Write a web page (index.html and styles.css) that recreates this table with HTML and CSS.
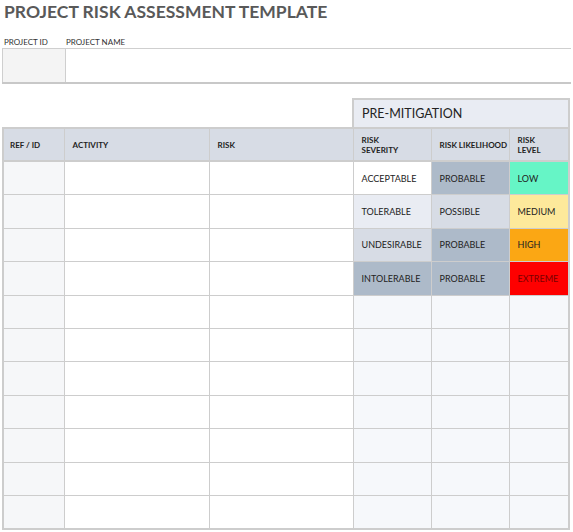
FILE: index.html
```html
<!DOCTYPE html>
<html>
<head>
<meta charset="utf-8">
<link rel="stylesheet" href="styles.css">
</head>
<body>
<div class="page">
  <h1 class="title">PROJECT RISK ASSESSMENT TEMPLATE</h1>
  <div class="proj">
    <div class="proj-labels">
      <span class="lbl lbl-id">PROJECT ID</span>
      <span class="lbl">PROJECT NAME</span>
    </div>
    <div class="proj-box">
      <div class="proj-id"></div>
      <div class="proj-name"></div>
    </div>
  </div>
  <table class="risk">
    <colgroup>
      <col class="c1"><col class="c2"><col class="c3"><col class="c4"><col class="c5"><col class="c6">
    </colgroup>
    <tr class="pre-row">
      <td colspan="3" class="blank"></td>
      <td colspan="3" class="pre">PRE-MITIGATION</td>
    </tr>
    <tr class="head">
      <th>REF / ID</th><th>ACTIVITY</th><th>RISK</th><th>RISK<br>SEVERITY</th><th>RISK LIKELIHOOD</th><th>RISK<br>LEVEL</th>
    </tr>
    <tr>
      <td class="id"></td><td></td><td></td>
      <td class="sev-acc">ACCEPTABLE</td><td class="lk-prob">PROBABLE</td><td class="lv-low">LOW</td>
    </tr>
    <tr>
      <td class="id"></td><td></td><td></td>
      <td class="sev-tol">TOLERABLE</td><td class="lk-poss">POSSIBLE</td><td class="lv-med">MEDIUM</td>
    </tr>
    <tr>
      <td class="id"></td><td></td><td></td>
      <td class="sev-und">UNDESIRABLE</td><td class="lk-prob">PROBABLE</td><td class="lv-high">HIGH</td>
    </tr>
    <tr>
      <td class="id"></td><td></td><td></td>
      <td class="sev-int">INTOLERABLE</td><td class="lk-prob">PROBABLE</td><td class="lv-ext">EXTREME</td>
    </tr>
    <tr><td class="id"></td><td></td><td></td><td class="e"></td><td class="e"></td><td class="e"></td></tr>
    <tr><td class="id"></td><td></td><td></td><td class="e"></td><td class="e"></td><td class="e"></td></tr>
    <tr><td class="id"></td><td></td><td></td><td class="e"></td><td class="e"></td><td class="e"></td></tr>
    <tr><td class="id"></td><td></td><td></td><td class="e"></td><td class="e"></td><td class="e"></td></tr>
    <tr><td class="id"></td><td></td><td></td><td class="e"></td><td class="e"></td><td class="e"></td></tr>
    <tr><td class="id"></td><td></td><td></td><td class="e"></td><td class="e"></td><td class="e"></td></tr>
    <tr><td class="id"></td><td></td><td></td><td class="e"></td><td class="e"></td><td class="e"></td></tr>
  </table>
</div>
</body>
</html>
```
FILE: styles.css
```css
html, body {
  margin: 0;
  padding: 0;
  background: #fff;
}
body {
  font-family: Lato, "Noto Sans", sans-serif;
  color: #222;
}
.page {
  width: 569px;
  padding: 0 2px;
}
.title {
  margin: 0;
  padding: 1px 0 0 2px;
  font-size: 17.5px;
  line-height: 22px;
  font-weight: 700;
  color: #595959;
}
.proj {
  margin-top: 14px;
}
.proj-labels {
  display: flex;
  font-size: 8px;
  line-height: 10px;
  color: #333;
  padding-left: 2px;
}
.lbl-id {
  width: 62px;
}
.proj-box {
  display: flex;
  height: 33px;
  border-top: 1px solid #cfcfcf;
  border-bottom: 2px solid #c8c8c8;
  margin-top: 1px;
}
.proj-id {
  width: 62px;
  background: #f4f4f4;
  border-left: 1px solid #cfcfcf;
  border-right: 1px solid #cfcfcf;
}
.proj-name {
  flex: 1;
}
.risk {
  margin-top: 14px;
  width: 566px;
  border-collapse: collapse;
  table-layout: fixed;
}
.c1 { width: 61px; }
.c2 { width: 145px; }
.c3 { width: 144px; }
.c4 { width: 78px; }
.c5 { width: 78px; }
.c6 { width: 60px; }
.risk td, .risk th {
  border: 1px solid #cdcdcd;
  height: 32.4px;
  padding: 0 0 0 8px;
  font-size: 9px;
  text-align: left;
  vertical-align: middle;
  color: #222;
}
.risk th {
  font-weight: 700;
  font-size: 8px;
  line-height: 10px;
  background: #d7dce5;
  border-bottom: 2px solid #cdcdcd;
  height: 31px;
}
.risk .blank {
  border: none;
  border-bottom: 2px solid #cdcdcd;
  height: 27px;
}
.risk .pre {
  background: #e9ecf3;
  font-size: 12.5px;
  height: 27px;
  color: #222;
  border: 2px solid #cdcdcd;
  padding-left: 8px;
}
.risk tr td:first-child, .risk tr th:first-child {
  border-left: 2px solid #cdcdcd;
  padding-left: 6px;
}
.risk tr td:last-child, .risk tr th:last-child {
  border-right: 2px solid #cdcdcd;
}
.risk tr:last-child td {
  border-bottom: 2px solid #cdcdcd;
}
.risk .pre-row td:first-child {
  border-left: none;
}
.risk td.id {
  background: #f6f7f9;
}
.risk td.e {
  background: #f6f8fb;
}
.sev-acc { background: #ffffff; }
.sev-tol { background: #e9ecf3; }
.sev-und { background: #d7dce5; }
.sev-int { background: #adbac9; }
.lk-prob { background: #adbac9; }
.lk-poss { background: #d7dce5; }
.lv-low { background: #66f5c6; }
.lv-med { background: #fde99b; }
.lv-high { background: #fba714; }
.lv-ext { background: #fe0000; }
.risk td.lv-ext { color: #7a0000; }
```
